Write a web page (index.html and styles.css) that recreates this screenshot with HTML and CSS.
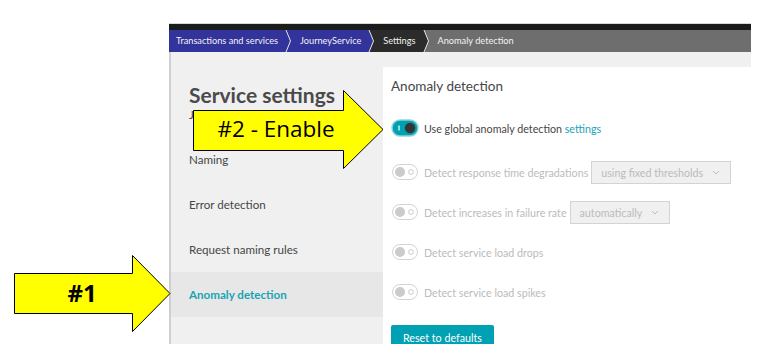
FILE: index.html
```html
<!DOCTYPE html>
<html lang="en">
<head>
  <meta charset="UTF-8" />
  <title>Service settings - Anomaly detection</title>
  <link rel="stylesheet" href="styles.css">
</head>
<body>
  <div class="window">
    <div class="topbar"></div>
    <!-- breadcrumb -->
    <div class="crumbs">
      <div class="crumb blue first">Transactions and services</div>
      <svg class="sep" viewBox="0 0 6 22" style="background:#33339c"><polygon points="0,0 1,0 5.5,11 1,22 0,22" fill="#33339c"/><polyline points="1,0 5.5,11 1,22" fill="none" stroke="#e6e6e6" stroke-width="1"/></svg>
      <div class="crumb blue">JourneyService</div>
      <svg class="sep" viewBox="0 0 6 22" style="background:#2b2b2b"><polygon points="0,0 1,0 5.5,11 1,22 0,22" fill="#33339c"/><polyline points="1,0 5.5,11 1,22" fill="none" stroke="#e6e6e6" stroke-width="1"/></svg>
      <div class="crumb dark">Settings</div>
      <svg class="sep" viewBox="0 0 6 22" style="background:#6e6e6e"><polygon points="0,0 1,0 5.5,11 1,22 0,22" fill="#2b2b2b"/><polyline points="1,0 5.5,11 1,22" fill="none" stroke="#e6e6e6" stroke-width="1"/></svg>
      <div class="crumb grey">Anomaly detection</div>
    </div>

    <div class="frame">
      <div class="strip"></div>
      <div class="content">
        <aside class="sidebar">
          <h2 class="side-title">Service settings</h2>
          <div class="nav-item">JourneyService</div>
          <div class="nav-item">Naming</div>
          <div class="nav-item">Error detection</div>
          <div class="nav-item">Request naming rules</div>
          <div class="nav-item active">Anomaly detection</div>
        </aside>

        <main class="panel">
          <h3 class="panel-title">Anomaly detection</h3>

          <div class="row first">
            <svg class="toggle" viewBox="0 0 28 18"><rect x="1" y="1" width="26" height="16" rx="8" fill="#00a1b2" stroke="#8fd3da" stroke-width="1.5"/><line x1="8" y1="6.5" x2="8" y2="11.5" stroke="#fff" stroke-width="1.2"/><circle cx="19" cy="9" r="5.2" fill="#353535"/></svg>
            <span class="label">Use global anomaly detection <a class="link">settings</a></span>
          </div>

          <div class="row off">
            <svg class="toggle" viewBox="0 0 28 18"><rect x="1.5" y="1.5" width="25" height="15" rx="7.5" fill="#fff" stroke="#d4d4d4"/><circle cx="9" cy="9" r="5" fill="#cbcbcb"/><circle cx="20" cy="9" r="2.4" fill="none" stroke="#cbcbcb"/></svg>
            <span class="label">Detect response time degradations</span>
            <div class="select">using fixed thresholds <svg class="chev" viewBox="0 0 8 5"><polyline points="1,1 4,4 7,1" fill="none" stroke="#bdbdbd" stroke-width="1"/></svg></div>
          </div>

          <div class="row off">
            <svg class="toggle" viewBox="0 0 28 18"><rect x="1.5" y="1.5" width="25" height="15" rx="7.5" fill="#fff" stroke="#d4d4d4"/><circle cx="9" cy="9" r="5" fill="#cbcbcb"/><circle cx="20" cy="9" r="2.4" fill="none" stroke="#cbcbcb"/></svg>
            <span class="label">Detect increases in failure rate</span>
            <div class="select">automatically <svg class="chev" viewBox="0 0 8 5"><polyline points="1,1 4,4 7,1" fill="none" stroke="#bdbdbd" stroke-width="1"/></svg></div>
          </div>

          <div class="row off">
            <svg class="toggle" viewBox="0 0 28 18"><rect x="1.5" y="1.5" width="25" height="15" rx="7.5" fill="#fff" stroke="#d4d4d4"/><circle cx="9" cy="9" r="5" fill="#cbcbcb"/><circle cx="20" cy="9" r="2.4" fill="none" stroke="#cbcbcb"/></svg>
            <span class="label">Detect service load drops</span>
          </div>

          <div class="row off">
            <svg class="toggle" viewBox="0 0 28 18"><rect x="1.5" y="1.5" width="25" height="15" rx="7.5" fill="#fff" stroke="#d4d4d4"/><circle cx="9" cy="9" r="5" fill="#cbcbcb"/><circle cx="20" cy="9" r="2.4" fill="none" stroke="#cbcbcb"/></svg>
            <span class="label">Detect service load spikes</span>
          </div>

          <button class="reset">Reset to defaults</button>
        </main>
      </div>
    </div>
  </div>

  <!-- callout arrows drawn over the screenshot -->
  <svg class="callouts" viewBox="0 0 779 358">
    <polygon points="193.5,110.5 343.5,110.5 343.5,90.5 383,129.5 343.5,168.5 343.5,150.5 193.5,150.5" fill="#ffff00" stroke="#000" stroke-width="1"/>
    <text x="276" y="137" class="callout-text" text-anchor="middle">#2 - Enable</text>
    <polygon points="14.5,273.5 132.5,273.5 132.5,255.5 170,293.5 132.5,331.5 132.5,313.5 14.5,313.5" fill="#ffff00" stroke="#000" stroke-width="1"/>
    <text x="82" y="302" class="callout-text bold" text-anchor="middle">#1</text>
  </svg>
</body>
</html>
```

FILE: styles.css
```css
body {
  margin: 0;
  background: #fff;
  font-family: Lato, "Open Sans", sans-serif;
  color: #454646;
  position: relative;
  height: 358px;
  overflow: hidden;
}
.window {
  margin: 23px 0 0 169px;
  width: 582px;
  height: 320px;
  background: #f0f0f0;
  border-top: 1px solid #d8d8d8;
  overflow: hidden;
  display: flex;
  flex-direction: column;
}
.topbar {
  height: 6px;
  flex: none;
  background: #1b1b1b;
}

/* breadcrumb */
.crumbs {
  height: 22px;
  flex: none;
  display: flex;
  font-size: 9.2px;
  line-height: 22px;
  color: #f2f2f2;
}
.crumb {
  padding: 0 7px 0 9px;
  white-space: nowrap;
}
.crumb.first { padding-left: 7px; }
.crumb.blue { background: #33339c; }
.crumb.dark { background: #2b2b2b; }
.crumb.grey { background: #6e6e6e; flex: 1; }
.sep {
  width: 6px;
  height: 22px;
  display: block;
  flex: none;
}

.frame {
  flex: 1;
  min-height: 0;
  display: flex;
  flex-direction: column;
  border-left: 2px solid #cfcfcf;
}
.strip {
  height: 15px;
  flex: none;
}
.content {
  flex: 1;
  min-height: 0;
  display: flex;
}

/* left menu */
.sidebar {
  width: 212px;
  flex: none;
}
.side-title {
  margin: 16px 0 -15px 18px;
  font-size: 21px;
  line-height: 24px;
  font-weight: 700;
  color: #4a4a4a;
}
.nav-item {
  height: 45px;
  line-height: 45px;
  padding-left: 18px;
  font-size: 11.6px;
  color: #454646;
}
.nav-item.active {
  background: #e7e7e7;
  color: #1aa3b5;
  font-weight: 700;
}

/* main panel */
.panel {
  flex: 1;
  background: #fff;
  padding-left: 8px;
}
.panel-title {
  margin: 9px 0 12px;
  font-size: 13.5px;
  line-height: 20px;
  font-weight: 400;
  color: #454646;
}
.row {
  height: 40px;
  display: flex;
  align-items: center;
}
.row.first {
  margin-bottom: 4px;
}
.toggle {
  width: 28px;
  height: 18px;
  margin-right: 5px;
  flex: none;
}
.label {
  font-size: 10.7px;
  white-space: nowrap;
}
.link {
  color: #1aa3b5;
}
.row.off .label {
  color: #bbbbbb;
}
.select {
  margin-left: 3px;
  height: 21px;
  line-height: 21px;
  padding: 0 10px 0 9px;
  border: 1px solid #d3d3d3;
  background: #f0f0f0;
  font-size: 10.7px;
  color: #bbbbbb;
  display: flex;
  align-items: center;
  gap: 9px;
  white-space: nowrap;
}
.chev {
  width: 8px;
  height: 5px;
}
.reset {
  margin-top: 13px;
  background: #00a1b2;
  color: #fff;
  border: none;
  border-radius: 2px;
  font-family: Lato, "Open Sans", sans-serif;
  font-size: 10.7px;
  padding: 5px 12px;
  height: 25px;
}

/* callouts */
.callouts {
  position: absolute;
  left: 0;
  top: 0;
  width: 779px;
  height: 358px;
}
.callout-text {
  font-family: "Open Sans", sans-serif;
  font-size: 22.5px;
  fill: #000;
}
.callout-text.bold {
  font-weight: 700;
  font-size: 24px;
}
```
